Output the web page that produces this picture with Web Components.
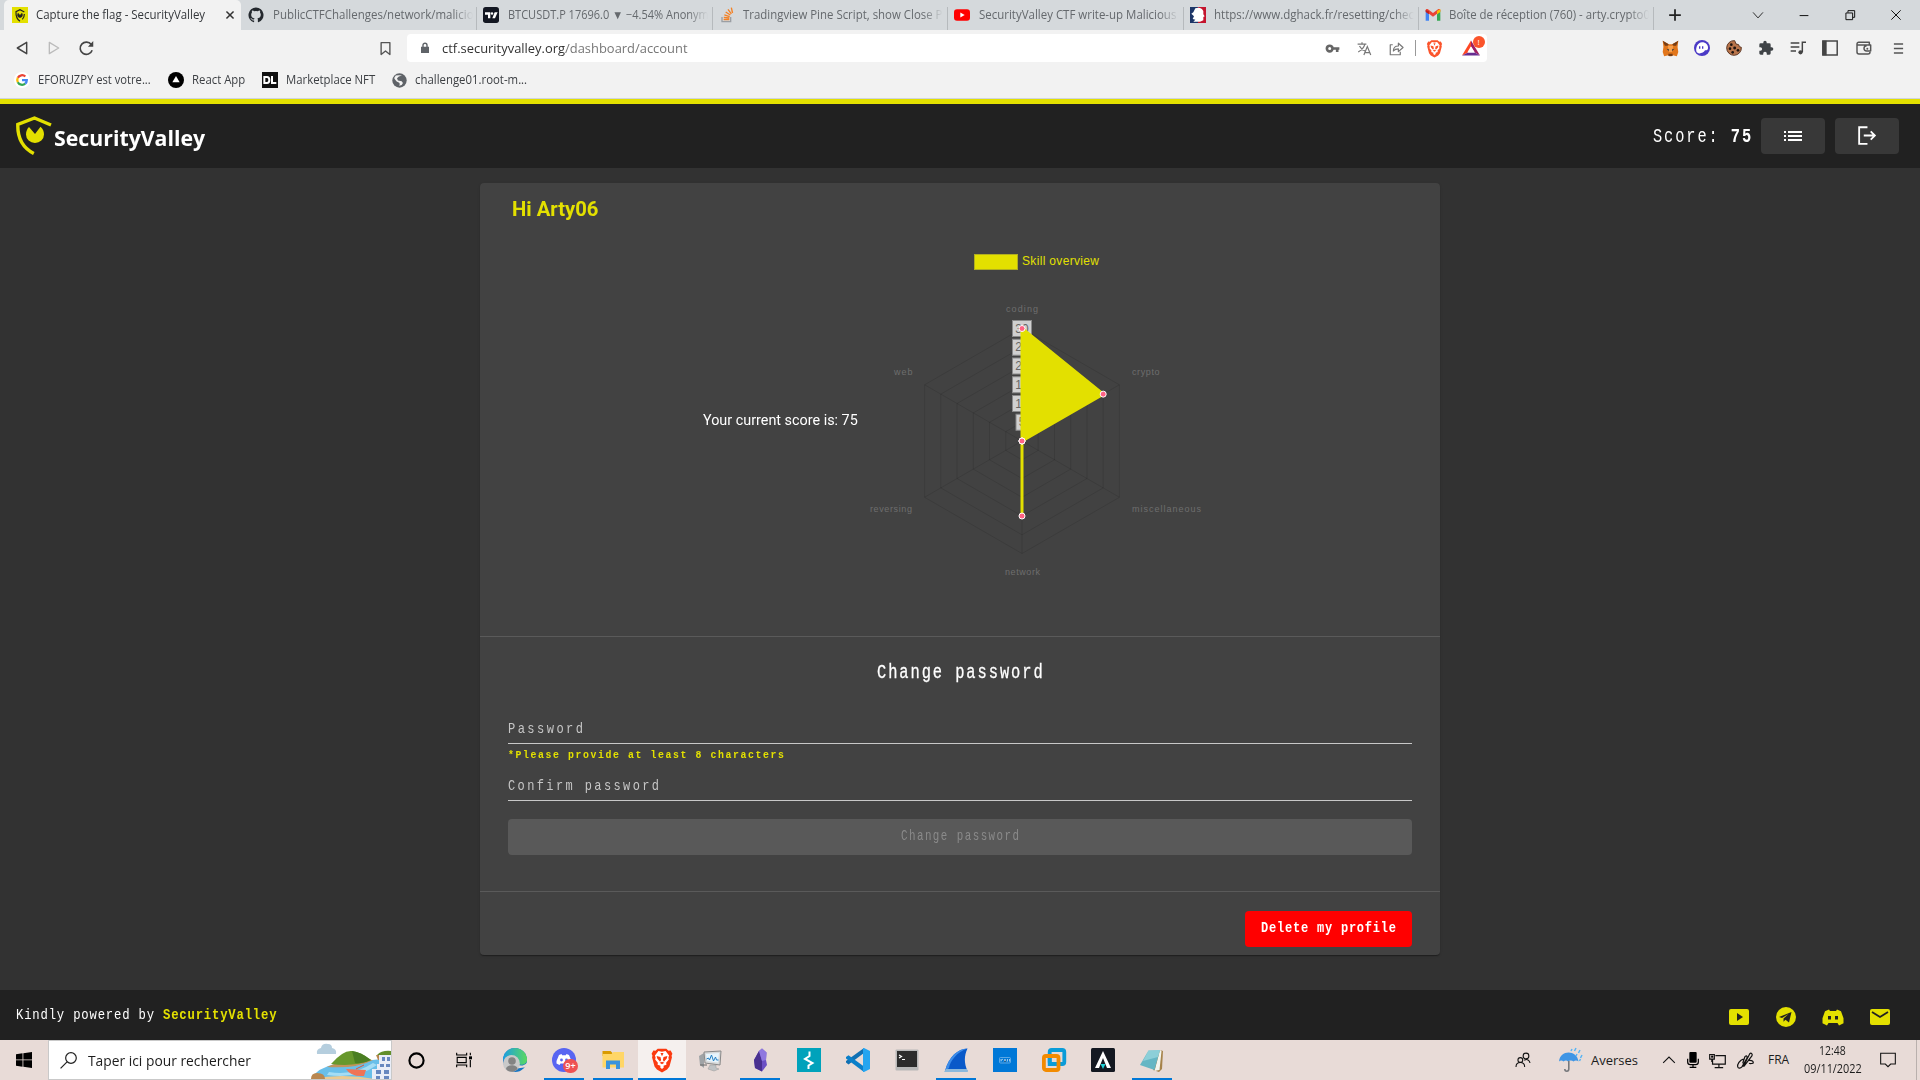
<!DOCTYPE html>
<html lang="fr">
<head>
<meta charset="utf-8">
<title>Capture the flag - SecurityValley</title>
<style>
html,body{margin:0;height:100%;overflow:hidden}
body{width:1920px;height:1080px;display:flex;flex-direction:column;background:#323232;font-family:"Open Sans","Noto Sans",sans-serif}
</style>
</head>
<body>
<browser-chrome></browser-chrome>
<site-header></site-header>
<account-page></account-page>
<site-footer></site-footer>
<task-bar></task-bar>
<script>
/* Base class: renders a static template into an open shadow root. */
class Base extends HTMLElement {
  connectedCallback() {
    if (this.shadowRoot) return;
    this.attachShadow({ mode: 'open' }).innerHTML = this.view();
    if (this.ready) this.ready();
  }
}
const place = (m, t) => m ? `margin-left:${m}px;` : '';

/* Text squeezed or stretched horizontally to a fixed width. */
class FitText extends Base {
  view() {
    const s = this.getAttribute('size') || 12, lh = this.getAttribute('lh') || Math.round(s * 1.4);
    return `<style>:host{display:block;flex:none;width:${this.getAttribute('w')}px;height:${lh}px;font-size:${s}px;line-height:${lh}px;white-space:pre;${place(this.getAttribute('ml'))}}
    span{display:inline-block;transform-origin:0 50%;letter-spacing:${this.getAttribute('ls') || 0}px}</style><span><slot></slot></span>`;
  }
  ready() {
    const sp = this.shadowRoot.querySelector('span');
    const natural = sp.offsetWidth - (+this.getAttribute('ls') || 0);
    if (natural > 0) sp.style.transform = `scaleX(${this.getAttribute('w') / natural})`;
  }
}

const LION = `<path fill="VAR" d="M8 1.500h8l2 2 2-.3 1.600 3-.8 1.800.4 1.500-2.300 8.500-2.200 2.700L12 23.500l-4.700-2.800L5.100 18 2.800 9.500 3.200 8l-.8-1.800 1.600-3 2 .3z"/><path fill="#fff" d="M12 4.300l3.300-.5 3.200 4-.6 2.200.4 1.600-2.500 3 .3 1.700-2.700 1 .2 1.700L12 20.300 10.400 19l.2-1.700-2.700-1 .3-1.700-2.500-3 .4-1.600-.6-2.200 3.200-4z"/><path fill="VAR" d="M7 8.300l3.600.9.600 2.800-1 1.600-2.600-2.900zM17 8.300l-3.600.9-.6 2.800 1 1.600 2.600-2.900zM9.800 14.500l2.200-.9 2.200.9-2.200 1.500zM10.600 5.500h2.800l-1.400 3z"/>`;
const I = {
  sv: `<rect width="24" height="24" fill="#e3e000"/><path fill="none" stroke="#222" stroke-width="1.800" d="M18.500 7.500L12 4 6 7c-.3 6 1 11 6 14.500M18.500 10.500c0 3.500-.8 6-3 8"/><path fill="#222" d="M9 8.500l3 3.500 3-3.500c2.500 4 .5 7.500-3 7.500s-5.500-3.500-3-7.500z"/>`,
  github: `<path fill="#24292e" d="M12 .8a11.300 11.300 0 0 0-3.600 22c.6.100.8-.2.800-.5v-2.200c-3.100.7-3.800-1.300-3.800-1.300-.5-1.300-1.300-1.700-1.300-1.700-1-.7.100-.7.100-.7 1.100.1 1.700 1.200 1.700 1.200 1 1.700 2.700 1.200 3.300.9.100-.7.400-1.200.7-1.500-2.500-.3-5.100-1.200-5.100-5.600 0-1.200.4-2.300 1.200-3-.1-.3-.5-1.500.1-3 0 0 .9-.3 3.100 1.100a10.700 10.700 0 0 1 5.600 0C17 5.100 17.900 5.400 17.900 5.400c.6 1.500.2 2.700.1 3 .7.700 1.200 1.800 1.200 3 0 4.400-2.700 5.300-5.200 5.600.4.400.8 1.100.8 2.100v3.200c0 .3.200.6.800.5A11.300 11.300 0 0 0 12 .8z"/>`,
  tv: `<rect width="24" height="24" rx="4" fill="#131722"/><path fill="#fff" d="M3 8h8v9H7.500v-5.500H3zM17.500 8H22l-4 9h-4z"/><circle cx="13.500" cy="9.700" r="1.800" fill="#fff"/>`,
  so: `<path d="M4.500 15v7h13v-7" fill="none" stroke="#9b9fa4" stroke-width="2"/><path stroke="#f48024" stroke-width="2" d="M7 18.800h8.500M7.200 15.500l8.300 1M8 11.800l8 2.500M10 7.500l7 4.500M13.500 3.500l5 6.700M18.500 1l1.800 8"/>`,
  yt: `<rect y="3.500" width="24" height="17" rx="4.500" fill="#f00"/><path fill="#fff" d="M9.500 8.200v7.600l6.500-3.800z"/>`,
  fr: `<path fill="#1c3668" d="M0 0h12v24H0z"/><path fill="#c4142d" d="M12 0h12v24H12z"/><path fill="#fff" d="M8 2q8-3 12 4v5l2 3-2 1v5l-5 2H5l3-3-4-1 2-4-4-4 3-2z"/>`,
  gmail: `<path fill="#4285f4" d="M1 5v15.500h5V11z"/><path fill="#34a853" d="M23 5v15.500h-5V11z"/><path fill="#ea4335" d="M1 6.500V5c0-2 2-2.500 3.500-1.500L12 9l7.500-5.500C21 2.500 23 3 23 5v1.500l-11 8.300z"/><path fill="#fbbc04" d="M18 6l5-3v4.500L18 11z"/><path fill="#c5221f" d="M1 4.500l5 2V11L1 7.500z"/>`,
  close: `<path stroke="#333" stroke-width="3.600" d="M3.500 3.500l17 17M20.500 3.500l-17 17"/>`,
  plus: `<path stroke="#222" stroke-width="3" d="M12 2v20M2 12h20"/>`,
  chev: `<path fill="none" stroke="#222" stroke-width="1.600" d="M3.500 7.500L12 17l8.500-9.500"/>`,
  min: `<path stroke="#111" stroke-width="1.700" d="M4.500 13h15"/>`,
  restore: `<path fill="none" stroke="#111" stroke-width="1.700" d="M5 8.500h11.500V20H5zM8.500 8V4.500H20V16h-3"/>`,
  wclose: `<path stroke="#111" stroke-width="1.700" d="M4 4l16 16M20 4L4 20"/>`,
  back: `<path fill="none" stroke="#444" stroke-width="2.200" stroke-linejoin="round" d="M19 3.500v17L5 12z"/>`,
  fwd: `<path fill="none" stroke="#bbb" stroke-width="2" stroke-linejoin="round" d="M5 3.500v17L19 12z"/>`,
  reload: `<path fill="none" stroke="#444" stroke-width="2.300" d="M20 14.500A8.700 8.700 0 1 1 18.800 6.500"/><path fill="#444" d="M21.500 1.500V9.500H14z"/>`,
  mark: `<path fill="none" stroke="#555" stroke-width="2.200" stroke-linejoin="round" d="M5 2.500h14v19L12 16l-7 5.500z"/>`,
  lock: `<path fill="#5f6368" d="M4 9.500h16v12.500H4z"/><path fill="none" stroke="#5f6368" stroke-width="2.800" d="M8 11V6.500a4 4 0 0 1 8 0V11"/>`,
  key: `<path fill="none" stroke="#666" stroke-width="4.200" d="M12 12a4.500 4.500 0 1 1-9 0 4.500 4.500 0 0 1 9 0zM12 12h11M19.500 12v5.500"/>`,
  trans: `<path fill="none" stroke="#777" stroke-width="1.900" d="M1 5h14M8 2v3M4 8c2 4 6 7 9 8M12.500 5.500C11 11 7 15 2 17.500M11 22.500L16.500 9 22 22.500M13 18.500h7"/>`,
  share: `<path fill="none" stroke="#777" stroke-width="1.900" stroke-linejoin="round" d="M6 6H2v16h16v-5M7 16c0-5 3.500-8 8-8V3.500l7.500 6.800L15 17v-4.500c-4 0-6 1-8 3.500z"/>`,
  brave: LION.replaceAll('VAR', '#fb542b'),
  bat: `<path fill="#ff4724" d="M12 2L0 22h0l8-4 4-8z"/><path fill="#9e1f63" d="M12 2l12 20-7-4-5-8z"/><path fill="#662d91" d="M0 22h24l-7-4H8z"/><path fill="#fff" d="M12 9.500l5 8.500H7z"/>`,
  fox: `<path fill="#e2761b" d="M1 1l8.500 5h5L23 1l-1 9 1 7-2 6-6-1.500-1.500 1.500h-3L9 21.500 3 23l-2-6 1-7z"/><path fill="#763d16" d="M1 1l3 7h4l1.500-2zM23 1l-3 7h-4l-1.500-2zM9 19.500h6v3H9z"/><path fill="#f6a04d" d="M8 8h8l-2 9h-4z"/><path fill="#233447" d="M6.500 12.500l3.500 1-.5 2zM17.500 12.500l-3.500 1 .5 2z"/>`,
  phantom: `<circle cx="12" cy="12" r="12" fill="#4b3ac6"/><path fill="#fff" d="M12 3.500c6 0 9 4 9 8s-2.500 4-4.500 4c-2 4.500-11.500 7-13 1.500-1-5.500 2-13.500 8.500-13.500z"/><path stroke="#4b3ac6" stroke-width="2" d="M8.500 9.500v3.500M13 9.500v3.500"/>`,
  cookie: `<path fill="#b9754b" stroke="#5c3521" stroke-width="1.500" d="M13 1A11 11 0 1 0 23 11l-3-1-1-3-4-1z"/><g fill="#1e1410"><circle cx="8" cy="7" r="2"/><circle cx="6" cy="13" r="2"/><circle cx="13" cy="12" r="2.200"/><circle cx="10" cy="18.500" r="2"/><circle cx="18" cy="15.500" r="2"/></g>`,
  puzzle: `<path fill="#3f4347" d="M20.500 11H19V7a2 2 0 0 0-2-2h-4V3.500a2.500 2.500 0 0 0-5 0V5H4a2 2 0 0 0-2 2v3.800h1.500a2.700 2.700 0 0 1 0 5.400H2V20c0 1.100.9 2 2 2h3.800v-1.500a2.700 2.700 0 0 1 5.400 0V22H17a2 2 0 0 0 2-2v-4h1.500a2.500 2.500 0 0 0 0-5z"/>`,
  music: `<path fill="none" stroke="#444" stroke-width="2.200" d="M1 4.500h13M1 10.500h13M1 16.500h8M18.500 18V3.500H24"/><circle cx="15.800" cy="18.500" r="3.200" fill="#444"/>`,
  side: `<rect x="1.200" y="1.500" width="21.600" height="21" fill="none" stroke="#444" stroke-width="2.200"/><path fill="#444" d="M1 1h6v22H1z"/>`,
  wallet: `<path fill="none" stroke="#555" stroke-width="2.200" stroke-linejoin="round" d="M20 7.500V3.500H4a2.500 2.500 0 0 0-2.500 2.500v12c0 2 1 3 3 3H18c2 0 3-1 3-3M2 7.500h20v9h-6a4 4 0 0 1 0-8"/><circle cx="17" cy="13" r="1.500" fill="#555"/>`,
  menu: `<path stroke="#555" stroke-width="2.800" d="M3.500 3.500h17M3.500 12h17M3.500 20.500h17"/>`,
  google: `<circle cx="12" cy="12" r="12" fill="#fff"/><g fill="none" stroke-width="3.400"><path stroke="#ea4335" d="M5.700 8.700A7.200 7.200 0 0 1 17 6.800"/><path stroke="#fbbc05" d="M5.700 8.700a7.200 7.200 0 0 0 0 6.600"/><path stroke="#34a853" d="M5.700 15.300A7.200 7.200 0 0 0 16.800 17.500"/><path stroke="#4285f4" d="M12 12.200h7.200a7.200 7.200 0 0 1-2.400 5.300"/></g>`,
  react: `<circle cx="12" cy="12" r="12" fill="#000"/><path fill="#fff" d="M12 6l5.500 9.500h-11z"/>`,
  dl: `<rect width="24" height="24" fill="#111"/><path fill="none" stroke="#fff" stroke-width="3" d="M3.500 7.500h4a3.500 4.500 0 0 1 0 9h-4zM15 6v10.500h6.500"/>`,
  globe: `<circle cx="12" cy="12" r="11.500" fill="#5f6368"/><path fill="#f2f2f2" d="M16 4l-5 1.500-3 3 1.500 3.500 6 1 2 3-2 3-4 1.500 1-3-1-2-4-2-3-3.500-1-2 2.500-4L11 3.500z"/>`,
  list: `<path fill="#fff" d="M3 9h2V7H3zm0 4h2v-2H3zm0 4h2v-2H3zM7 7v2h14V7zm0 6h14v-2H7zm0 4h14v-2H7z"/>`,
  logout: `<path fill="none" stroke="#fff" stroke-width="2" d="M13 3H4v18h9M9 12h12M16.500 7.500L21 12l-4.500 4.500"/>`,
  fyt: `<path fill="#e3e000" fill-rule="evenodd" d="M4 4h16a2 2 0 0 1 2 2v12a2 2 0 0 1-2 2H4a2 2 0 0 1-2-2V6a2 2 0 0 1 2-2zm6 4v8l6-4z"/>`,
  tg: `<path fill="#e3e000" fill-rule="evenodd" d="M12 2a10 10 0 1 0 0 20 10 10 0 0 0 0-20zm5.500 5L15 17.500l-3.500-2.700-2 2V13.500l5-4.500-6.500 4L5 12z"/>`,
  disc: `<path fill="#e3e000" fill-rule="evenodd" d="M8 4.500L9 6h6l1-1.500 4 1.700 2.500 7v5L18 20.500 16.500 18h-9L6 20.500l-4.500-2.300v-5l2.500-7zM7 11v3.500h3V11zm7 0v3.500h3V11z"/>`,
  mail: `<path fill="#e3e000" d="M4 4h16a2 2 0 0 1 2 2v12a2 2 0 0 1-2 2H4a2 2 0 0 1-2-2V6a2 2 0 0 1 2-2z"/><path fill="none" stroke="#212121" stroke-width="1.800" d="M4 7l8 5 8-5"/>`,
  win: `<path fill="#000" d="M0 3.200L9.800 1.900v9.500H0zM11 1.700L24 0v11.400H11zM0 12.500h9.800v9.500L0 20.700zM11 12.500h13V24l-13-1.700z"/>`,
  search: `<circle cx="15.500" cy="8.500" r="7.500" fill="none" stroke="#222" stroke-width="1.700"/><path stroke="#222" stroke-width="1.700" d="M10 14L.8 23.200"/>`,
  cortana: `<circle cx="12" cy="12" r="10" fill="none" stroke="#000" stroke-width="3"/>`,
  task: `<path fill="none" stroke="#000" stroke-width="1.700" d="M1 1v3.500h15V1M1 23v-3.500h15V23M1.800 8h13.500v8H1.800zM21.500 1v4M21.500 12v11"/><path d="M19.500 6.500h4.500v4.500h-4.500z"/>`,
  edge: `<defs><linearGradient id="e"><stop stop-color="#1b9de2"/><stop offset="1" stop-color="#5ad95f"/></linearGradient></defs><circle cx="12" cy="12" r="12" fill="#1675c4"/><path fill="url(#e)" d="M0 12a12 12 0 0 1 24 0c0 4-5 6-9 4l-3-7-9 2z"/><path fill="#e8dad6" d="M14 16.500c4 2 7.500 1 10-1.500v3l-3 1.500-7 1z"/><circle cx="8.500" cy="15.500" r="8.400" fill="#c9c9c9"/><circle cx="9" cy="13" r="3.800" fill="#838383"/><path fill="#838383" d="M3 21c0-5 11.500-5 11.500 0-3 3.500-8.500 4-11.500 0z"/>`,
  discord: `<circle cx="12" cy="12" r="12" fill="#5865f2"/><path fill="#fff" d="M7 7l2.500-1 .7 1.200h3.600L14.500 6 17 7l2.500 6v2.500L16.500 17l-1-1.600h-7L7.500 17l-3-1.500V13z"/><circle cx="9.500" cy="12" r="1.400" fill="#5865f2"/><circle cx="14.500" cy="12" r="1.400" fill="#5865f2"/>`,
  folder: `<path fill="#d99a00" d="M1.500 3h8l2 2v3h-10z"/><path fill="#ffd667" d="M1.500 6h9l2-2H23v15.500H1.500z"/><path fill="#3a93dc" d="M5 12.500h14V21h-4v-4.500H9V21H5z"/>`,
  lion: LION.replaceAll('VAR', '#fb3a10'),
  perf: `<path fill="#9fa3a6" d="M0 8l5-3v15l-4-3z"/><path fill="#d8dadb" stroke="#888" d="M5 4l17-1-1 14-15-2z"/><path fill="#e7f5fd" d="M7 6l13-1-1 9.500-11-1.500z"/><path fill="none" stroke="#2580c4" d="M7.500 11l2-1 1 2 2-5 2 6 2-4 1 3h2"/><path fill="#bfc2c4" stroke="#999" stroke-width=".5" d="M11 17h6v3l3 1-5 2-6-2z"/><path stroke="#666" d="M1 17h7"/>`,
  obs: `<path fill="#6c50c4" d="M14 .5l4.500 4-.5 7.500 1 5-5 6.500L7 20l-1-8 5-9z"/><path fill="#493090" d="M11 3l3 10 0 10.500L7 20l-1-8z"/><path fill="#8f78df" d="M14 .5l4.500 4L18 12l-4 1-3-10z"/>`,
  burp: `<rect width="24" height="24" fill="#00a2bb"/><path fill="none" stroke="#fff" stroke-width="2" d="M12.500 3.500v4.500L8 11l7.500 4-4 2.500v3.500"/>`,
  vsc: `<path fill="#1070b3" d="M0 14.500l2.500 2L18 5V0L0 13z"/><path fill="#0a7fc9" d="M0 9l2.500-1.700L18 18.500V24L0 10.500z"/><path fill="#25a5f0" d="M17 0h1l6 3v18l-6 3h-1z"/>`,
  term: `<rect x=".5" y="1.500" width="23" height="21" rx="1" fill="#b8b8b8"/><rect x="2" y="3" width="20" height="16" fill="#2c2c2c"/><path fill="none" stroke="#fff" stroke-width="1.200" d="M4 7l2.500 1.500L4 10M7 11.500h3"/>`,
  shark: `<path fill="#0959c9" d="M1 23C5 8 14 1 23.500.5 20 8 20 15 23.500 23z"/><path fill="#3c8ce9" d="M1 23C5 8 14 1 23.500.5 13 4 6 13 5 20z"/><path fill="#8bb9dd" d="M0 24l2-3h21l1 3z"/>`,
  kali: `<rect width="24" height="24" fill="#0078d7"/><rect x="6.500" y="9.500" width="11" height="5.500" rx="1" fill="none" stroke="#74b5e9" stroke-width=".8"/><path stroke="#a5cff1" stroke-width=".9" d="M8 11v2.500M8 12.500l2-1.500M11 13.500l1-2.500 1 2.500M14.500 11v2.500M16.500 11v2.500"/>`,
  vm: `<rect x="7.700" y="2" width="14.600" height="14" rx="2" fill="none" stroke="#0b9cd8" stroke-width="3.800"/><rect x="1.900" y="8" width="14.600" height="14" rx="2" fill="none" stroke="#f38b00" stroke-width="3.800"/><path stroke="#0b9cd8" stroke-width="3.800" d="M7.700 10v6h5"  fill="none"/>`,
  aa: `<rect width="24" height="24" rx="1.500" fill="#141821"/><path fill="#fff" d="M12 3l8 17h-4l-4-10-4 10H4z"/><path fill="#21d1d8" d="M9.500 16h5l-2.500 5z"/>`,
  note: `<path fill="#a6834b" d="M20 2l3 1-1 18-3 3-6-2z"/><path fill="#f4f5ee" d="M20 2l1.500 1-2 19-5 1z"/><path fill="#65b6c4" d="M8.500 2.500L20 2l-5.500 20L0 17z"/><path fill="#a7dfe6" d="M8.500 2.500L20 2l-2 7L3 13z" opacity=".6"/>`,
  people: `<g fill="none" stroke="#111" stroke-width="1.600"><circle cx="16.500" cy="6" r="4.300"/><circle cx="8" cy="12" r="3.600"/><path d="M1.500 22.500c0-9 13-9 13 0M14 12.500c4-3 8 0 8.500 4"/></g>`,
  umb: `<path fill="#3f95e5" d="M0 13.500C1 1.500 18 1.500 19.500 13.500c-1.500-1.500-3.500-1.500-5 0-1.500-1.500-4-1.500-5.500 0-1-1.500-3-1.500-4.500 0-1.500-1.300-3-1.300-4.500 0z"/><path fill="none" stroke="#77797c" stroke-width="1.600" d="M9.800 13v8c0 3-4 3-4 0"/><path stroke="#57b4f5" stroke-width="1.500" d="M13 1l-1 2M17 0l-1.500 3M21 2l-1.500 3M18 6l-1 2M23 7l-1.500 3M21.500 11l-1 2"/>`,
  up: `<path fill="none" stroke="#111" stroke-width="1.800" d="M2 17L12 7l10 10"/>`,
  mic: `<rect x="6.500" y="0" width="11" height="16" rx="1.500"/><path fill="none" stroke="#000" stroke-width="1.800" d="M4 10v5q0 4 4 4h8q4 0 4-4v-5M12 19v4M7 23h10"/>`,
  net: `<path fill="none" stroke="#111" stroke-width="1.700" d="M9 5h14v12H5v-6M14 17v5M8 22h12M1 3.500h6.500V10H1zM4 10v4"/><path d="M3 5h3v3H3z"/>`,
  pen: `<path fill="none" stroke="#111" stroke-width="1.700" d="M9 20L18 2.500c2-2 4.500.5 3 3L10 20zM9 10c-5 1-9 8-8 11s4 2 6 0l7-12c1-3-1-5-3-2l-3 9M16 12c6-1 7 2 7 3s-4 2-6 1"/>`,
  notif: `<path fill="none" stroke="#111" stroke-width="1.600" d="M1 2h22v16h-7l-4 4-4-4H1z"/>`
};
class UiIcon extends Base {
  view() {
    const s = this.getAttribute('size') || 16, vb = this.getAttribute('vb') || '0 0 24 24';
    return `<style>:host{display:block;flex:none;width:${s}px;height:${s}px;${place(this.getAttribute('ml'))}}svg{display:block;width:100%;height:100%;overflow:visible}</style><svg viewBox="${vb}">${I[this.getAttribute('name')] || ''}</svg>`;
  }
}

class BrowserTab extends Base {
  view() {
    const on = this.hasAttribute('active');
    return `<style>:host{display:flex;flex:none;align-items:center;height:30px;box-sizing:border-box;width:${on ? 237 : 235.4}px;padding-left:${on ? 8 : 7}px;
      ${on ? 'background:#f2f2f2;border-radius:5px 5px 0 0;color:#34373b' : 'color:#65696d'}}
      .t{margin-left:${on ? 8 : 8.5}px;overflow:hidden;width:${on ? 171 : 200}px;${on ? '' : '-webkit-mask-image:linear-gradient(90deg,#000 90%,transparent)'}}
      i{flex:none;width:1px;height:23px;margin:7px -1px 0 auto;background:#b6babd}</style>
      <ui-icon name="${this.getAttribute('icon')}"></ui-icon><div class="t"><fit-text size="12" lh="18" w="${this.getAttribute('w')}">${this.getAttribute('label')}</fit-text></div>
      ${on ? '<ui-icon name="close" size="10" ml="17.500"></ui-icon>' : '<i></i>'}`;
  }
}

class BrowserChrome extends Base {
  view() {
    return `<style>:host{display:block;flex:none;height:99px;background:#f2f2f2;box-sizing:border-box;border-bottom:1px solid #cfd5dc}
    div{display:flex;align-items:center}.tabs{height:30px;background:#d5d9dc;padding-left:4px}
    .nav{height:36px}.url{height:28px;width:1080px;background:#fff;border-radius:4px;margin-left:14.500px;flex:none}
    .bm{height:28px;color:#3b3e42}.sep{width:1px;height:16px;background:#999;margin:0 11px 0 11px}
    .bat{position:relative;margin-left:18px}.bat b{position:absolute;left:11px;top:-3px;width:12px;height:12px;border-radius:6px;background:#fb542b;color:#fff;font:8px/12px "Open Sans",sans-serif;text-align:center;display:block}
    em{font-style:normal;color:#333}</style>
    <div class="tabs">
    <browser-tab active icon="sv" w="169" label="Capture the flag - SecurityValley"></browser-tab>
    <browser-tab icon="github" w="201" label="PublicCTFChallenges/network/malicio"></browser-tab>
    <browser-tab icon="tv" w="201" label="BTCUSDT.P 17696.0 ▼ −4.54% Anonym"></browser-tab>
    <browser-tab icon="so" w="199" label="Tradingview Pine Script, show Close P"></browser-tab>
    <browser-tab icon="yt" w="197" label="SecurityValley CTF write-up Malicious"></browser-tab>
    <browser-tab icon="fr" w="200" label="https://www.dghack.fr/resetting/chec"></browser-tab>
    <browser-tab icon="gmail" w="201" label="Boîte de réception (760) - arty.crypto0"></browser-tab>
    <ui-icon name="plus" size="14" ml="14.500"></ui-icon><ui-icon name="chev" size="14" ml="69.500"></ui-icon><ui-icon name="min" size="14" ml="32"></ui-icon><ui-icon name="restore" size="14" ml="32"></ui-icon><ui-icon name="wclose" size="14" ml="32"></ui-icon></div>
    <div class="nav"><ui-icon name="back" size="16" ml="14"></ui-icon><ui-icon name="fwd" size="16" ml="16"></ui-icon><ui-icon name="reload" size="17" ml="15.500"></ui-icon><ui-icon name="mark" size="15" ml="283"></ui-icon>
    <div class="url"><ui-icon name="lock" size="12" ml="12"></ui-icon><fit-text size="13.500" lh="20" w="246" ml="10.500" style="color:#777"><em>ctf.securityvalley.org</em>/dashboard/account</fit-text>
    <ui-icon name="key" size="15" ml="637"></ui-icon><ui-icon name="trans" size="15" ml="17"></ui-icon><ui-icon name="share" size="15" ml="17"></ui-icon><span class="sep"></span><ui-icon name="brave" size="19" style="margin-left:-2px"></ui-icon>
    <div class="bat"><ui-icon name="bat" size="18"></ui-icon><b>!</b></div></div>
    <ui-icon name="fox" size="17" ml="174.500"></ui-icon><ui-icon name="phantom" ml="15"></ui-icon><ui-icon name="cookie" ml="16"></ui-icon><ui-icon name="puzzle" ml="16"></ui-icon><ui-icon name="music" ml="16"></ui-icon><ui-icon name="side" ml="16"></ui-icon><ui-icon name="wallet" ml="18"></ui-icon><ui-icon name="menu" size="13" ml="20"></ui-icon></div>
    <div class="bm"><ui-icon name="google" ml="14"></ui-icon><fit-text size="12" lh="18" w="113" ml="8">EFORUZPY est votre...</fit-text><ui-icon name="react" ml="17"></ui-icon><fit-text size="12" lh="18" w="53" ml="8">React App</fit-text><ui-icon name="dl" ml="17"></ui-icon><fit-text size="12" lh="18" w="89" ml="8">Marketplace NFT</fit-text><ui-icon name="globe" size="15" ml="16.500"></ui-icon><fit-text size="12" lh="18" w="112" ml="8.500">challenge01.root-m...</fit-text></div>`;
  }
}

const MONO = '"Liberation Mono",monospace';
class SiteHeader extends Base {
  view() {
    return `<style>:host{display:flex;flex:none;height:69px;box-sizing:border-box;border-top:5px solid #e3e000;background:#212121;color:#fff;align-items:flex-start;padding-left:16px}
    svg{margin-top:12px;flex:none}.sc{font-family:${MONO}}.b{display:flex;align-items:center;justify-content:center;width:64px;height:36px;border-radius:4px;background:#383838;margin:14px 0 0 10px}.b+.b{margin-right:21px}
    .name{font-weight:700;margin-top:18px}</style>
    <svg width="36" height="39" viewBox="0 0 36 39"><path fill="none" stroke="#e3e000" stroke-width="3.400" d="M35 9L18.500 2 1.800 8.500C1.500 20 5 31 17.800 37.500"/><path fill="#e3e000" d="M13 11l6 7 5.500-7.200C27 13 28 15.500 28 18.500a9 8.500 0 0 1-18 0C10 15.500 11 13 13 11z"/></svg>
    <fit-text class="name" size="22" lh="30" w="151" ml="2">SecurityValley</fit-text>
    <fit-text class="sc" size="20" lh="26" w="98.500" ls="2.500" style="margin-left:auto;margin-top:20px">Score: <b>75</b></fit-text>
    <div class="b"><ui-icon name="list" size="24"></ui-icon></div><div class="b"><ui-icon name="logout" size="24" vb="-.5 -.5 26 26"></ui-icon></div>`;
  }
}

/* Radar chart; geometry is derived from the skill values. */
class SkillRadar extends Base {
  view() {
    const cx = 1022, cy = 441, R = 112.5, pt = (i, r) => [cx + r * Math.sin(i * Math.PI / 3), cy - r * Math.cos(i * Math.PI / 3)];
    const poly = f => [0, 1, 2, 3, 4, 5].map(i => pt(i, f(i)).map(v => v.toFixed(1)).join()).join(' ');
    const vals = [30, 25, 0, 20, 0, 0];
    let grid = '', ticks = '';
    for (let k = 1; k <= 6; k++) {
      grid += `<polygon points="${poly(() => R * k / 6)}"/>`;
      const y = cy - R * k / 6, w = k > 1 ? 19 : 12;
      ticks += `<rect x="${cx - w / 2}" y="${y - 8}" width="${w}" height="16" fill="#d0d0d0" stroke="#8a8a8a"/><text x="${cx}" y="${y + 4}" font-size="12" fill="#666" text-anchor="middle">${k * 5}</text>`;
    }
    for (let i = 0; i < 6; i++) { const p = pt(i, R); grid += `<path d="M${cx} ${cy}L${p}"/>`; }
    const lab = [['coding', 1006, 312, 32], ['crypto', 1132, 375, 27.500], ['miscellaneous', 1132, 512, 69], ['network', 1005, 574.500, 35], ['reversing', 870, 512, 42], ['web', 894, 375, 18.500]];
    return `<style>:host{display:block;flex:none;width:340px;height:370px;font-family:"Liberation Sans",Arial,sans-serif}svg{display:block}</style>
    <svg width="340" height="370" viewBox="868 230 340 370">
    <rect x="974.500" y="254.500" width="43" height="15" fill="#e3e000" stroke="#b0ae20"/><text x="1022" y="265" font-size="12" fill="#e3e000" textLength="77">Skill overview</text>
    <g fill="none" stroke="#000" stroke-opacity=".1">${grid}</g>${ticks}
    ${lab.map(l => `<text x="${l[1]}" y="${l[2]}" textLength="${l[3]}" font-size="9" fill="#6e6e6e">${l[0]}</text>`).join('')}
    <polygon points="${poly(i => R * vals[i] / 30)}" fill="#e3e000" stroke="#e3e000" stroke-width="3" stroke-linejoin="bevel"/>
    ${vals.map((v, i) => { const p = pt(i, R * v / 30); return `<circle cx="${p[0]}" cy="${p[1]}" r="3" fill="#ff6384" stroke="#fff"/>`; }).join('')}
    </svg>`;
  }
}

class PasswordField extends Base {
  view() {
    return `<style>:host{display:flex;align-items:flex-end;height:24px;border-bottom:1px solid #c8c8c8;color:#c6c6c6;padding-bottom:0;box-sizing:border-box}
    fit-text{margin-bottom:4px}</style><fit-text size="15" lh="18" ls="3" w="${this.getAttribute('w')}">${this.getAttribute('label')}</fit-text>`;
  }
}

class AccountPage extends Base {
  view() {
    return `<style>:host{display:flex;flex:none;height:822px;justify-content:center;align-items:flex-start;box-sizing:border-box;padding-top:15px;background:#323232;color:#fff}
    .card{width:960px;height:772px;border-radius:4px;background:#424242;box-shadow:0 2px 1px -1px rgba(0,0,0,.2),0 1px 1px rgba(0,0,0,.14),0 1px 3px rgba(0,0,0,.12);font-family:${MONO}}
    section{box-sizing:border-box}
    .skills{height:453px;padding:13px 0 0 32px;font-family:Roboto,sans-serif}.skills h1{margin:0;color:#e3e000;font-size:20px}
    .row{display:flex;margin:8px 0 0 191px}.row>fit-text{margin-top:180px}
    .pw{height:255px;border-top:1px solid #5a5a5a;padding:23px 28px 0;display:flex;flex-direction:column}
    .pw h2{margin:0 0 0 368.500px;font-size:20px;font-weight:400;-webkit-text-stroke:.3px #fff}
    .pw password-field:nth-of-type(1){margin-top:34px}.hint{margin-top:3px;color:#e3e000;font-weight:700}
    .pw password-field:nth-of-type(2){margin-top:14px}
    .btn{display:flex;align-items:center;justify-content:center;height:36px;border-radius:4px}
    .off{background:#595959;color:#8a8a8a;margin-top:18px;border-radius:4px}
    .del{height:64px;border-top:1px solid #5a5a5a;display:flex;justify-content:flex-end;padding:19px 28px 0 0}.red{background:#f00;width:167px;font-weight:700}</style>
    <div class="card"><section class="skills"><h1><fit-text size="20" lh="26" w="86">Hi Arty06</fit-text></h1>
    <div class="row"><fit-text size="14" lh="20" w="155">Your current score is: 75</fit-text><skill-radar style="margin-left:10px"></skill-radar></div></section>
    <section class="pw"><h2><fit-text size="20" lh="26" ls="2.500" w="166">Change password</fit-text></h2>
    <password-field label="Password" w="75"></password-field><fit-text class="hint" size="11" lh="16" ls="1.800" w="276">*Please provide at least 8 characters</fit-text>
    <password-field label="Confirm password" w="151"></password-field>
    <div class="btn off"><fit-text size="15" lh="20" ls="2" w="118">Change password</fit-text></div></section>
    <section class="del"><div class="btn red"><fit-text size="15" lh="20" ls="1" w="135">Delete my profile</fit-text></div></section></div>`;
  }
}

class SiteFooter extends Base {
  view() {
    return `<style>:host{display:flex;flex:none;align-items:center;height:50px;background:#212121;color:#fff;padding-left:16px;font-family:${MONO}}b{color:#e3e000}
    div{display:flex;gap:23px;margin:4px 28px 0 auto}</style><fit-text size="15" lh="20" ls="1" w="260.500" style="margin-top:1px">Kindly powered by <b>SecurityValley</b></fit-text>
    <div><ui-icon name="fyt" size="24"></ui-icon><ui-icon name="tg" size="24"></ui-icon><ui-icon name="disc" size="24"></ui-icon><ui-icon name="mail" size="24"></ui-icon></div>`;
  }
}

class TaskApp extends Base {
  view() {
    const st = this.getAttribute('state');
    return `<style>:host{display:flex;flex:none;position:relative;align-items:center;justify-content:center;width:${st === 'focus' ? 48 : 40}px;height:40px;box-sizing:border-box;margin:0 ${st === 'focus' ? .5 : 4.5}px;
    ${st ? 'border-bottom:2px solid #0078d7;padding-top:2px;' : ''}${st === 'focus' ? 'background:#f5f0ee' : ''}}
    b{position:absolute;left:19px;top:19px;width:15px;height:14px;border-radius:7px;background:#ee5253;color:#fff;font:600 9px/14px "Open Sans",sans-serif;text-align:center}</style>
    <ui-icon name="${this.getAttribute('icon')}" size="${this.getAttribute('size') || 24}"></ui-icon>${this.hasAttribute('badge') ? `<b>${this.getAttribute('badge')}</b>` : ''}`;
  }
}

class TaskBar extends Base {
  view() {
    return `<style>:host{display:flex;flex:none;align-items:center;height:40px;background:#e8dbd7;color:#1c1c1c}
    .search{display:flex;align-items:center;width:344px;height:40px;box-sizing:border-box;border:1px solid #c9c9c9;background:#fff;margin-left:16px;overflow:hidden;flex:none}
    .search svg{margin-left:auto;flex:none}.clock{display:flex;flex-direction:column;align-items:center;margin-left:14.500px;gap:2px}
    i{width:1px;height:40px;background:#b9b0ad;margin-left:20px}</style>
    <ui-icon name="win" ml="16"></ui-icon>
    <div class="search"><ui-icon name="search" size="17" ml="11"></ui-icon><fit-text size="14.500" lh="22" w="163" ml="11" style="margin-top:1px">Taper ici pour rechercher</fit-text>
    <svg width="80" height="38" viewBox="312 1041 80 38"><path fill="#b5cede" d="M318 1054q-1-5 4-6 1-5 7-4 4 0 4 4 5 1 4 6z"/><path fill="#69bfe9" d="M312 1079q6-11 24-15l56-6v21z"/><path fill="#a5ddf4" d="M330 1072q25 4 44-9l4 2q-19 14-50 10z"/><path fill="#ecca91" d="M313 1079q30-6 63 0z"/><path fill="#c3935c" d="M328 1067q15-7 34-8l12 1q-17 9-46 7z"/><path fill="#67982c" d="M332 1064q12-14 21-13 9 1 19 9-16 7-40 4z"/><path fill="#4a7e22" d="M353 1051q9 1 19 9-10 4-16 3z"/><path fill="#b98750" d="M377 1055h15v5h-13zM312 1079q0-6 6-6 8 0 8 6z"/><path fill="#638f2a" d="M378 1055q5-5 14-4v5z"/><path fill="#f07355" d="M347 1069l20 1-2 6q-13 1-18-7z"/><path stroke="#e45434" d="M357 1069l8-4"/><path fill="#e9edf7" d="M380 1055h12v24h-19v-10h5v-5h2z"/><path fill="#6787bf" d="M383 1057h3v4h-3zM388 1057h3v4h-3zM377 1070h5v4h-5zM385 1070h5v4h-5zM377 1076h4v3h-4zM385 1076h5v3h-5zM381 1064h4v3h-4zM387 1064h4v3h-4z"/></svg></div>
    <ui-icon name="cortana" size="17" ml="15.500"></ui-icon><ui-icon name="task" size="16" ml="31.500" style="margin-right:18.500px"></ui-icon>
    <task-app icon="edge"></task-app><task-app icon="discord" state="open" badge="9+"></task-app><task-app icon="folder" state="open"></task-app><task-app icon="lion" state="focus" size="26"></task-app><task-app icon="perf"></task-app><task-app icon="obs" state="open"></task-app><task-app icon="burp"></task-app><task-app icon="vsc"></task-app><task-app icon="term"></task-app><task-app icon="shark" state="open"></task-app><task-app icon="kali"></task-app><task-app icon="vm"></task-app><task-app icon="aa"></task-app><task-app icon="note" state="open"></task-app>
    <ui-icon name="people" ml="338"></ui-icon><ui-icon name="umb" size="24" ml="28.500"></ui-icon><fit-text size="13" lh="20" w="47" ml="8">Averses</fit-text><ui-icon name="up" size="14" ml="24"></ui-icon><ui-icon name="mic" ml="8.500"></ui-icon><ui-icon name="net" size="17" ml="8.500"></ui-icon><ui-icon name="pen" size="17" ml="11"></ui-icon><fit-text size="12" lh="18" w="21" ml="14">FRA</fit-text>
    <div class="clock"><fit-text size="12" lh="16" w="27">12:48</fit-text><fit-text size="12" lh="16" w="58">09/11/2022</fit-text></div><ui-icon name="notif" ml="18"></ui-icon><i></i>`;
  }
}
for (const [n, c] of Object.entries({ 'fit-text': FitText, 'ui-icon': UiIcon, 'browser-tab': BrowserTab, 'task-app': TaskApp, 'skill-radar': SkillRadar, 'password-field': PasswordField, 'browser-chrome': BrowserChrome, 'site-header': SiteHeader, 'account-page': AccountPage, 'site-footer': SiteFooter, 'task-bar': TaskBar })) customElements.define(n, c);
</script>
</body>
</html>
